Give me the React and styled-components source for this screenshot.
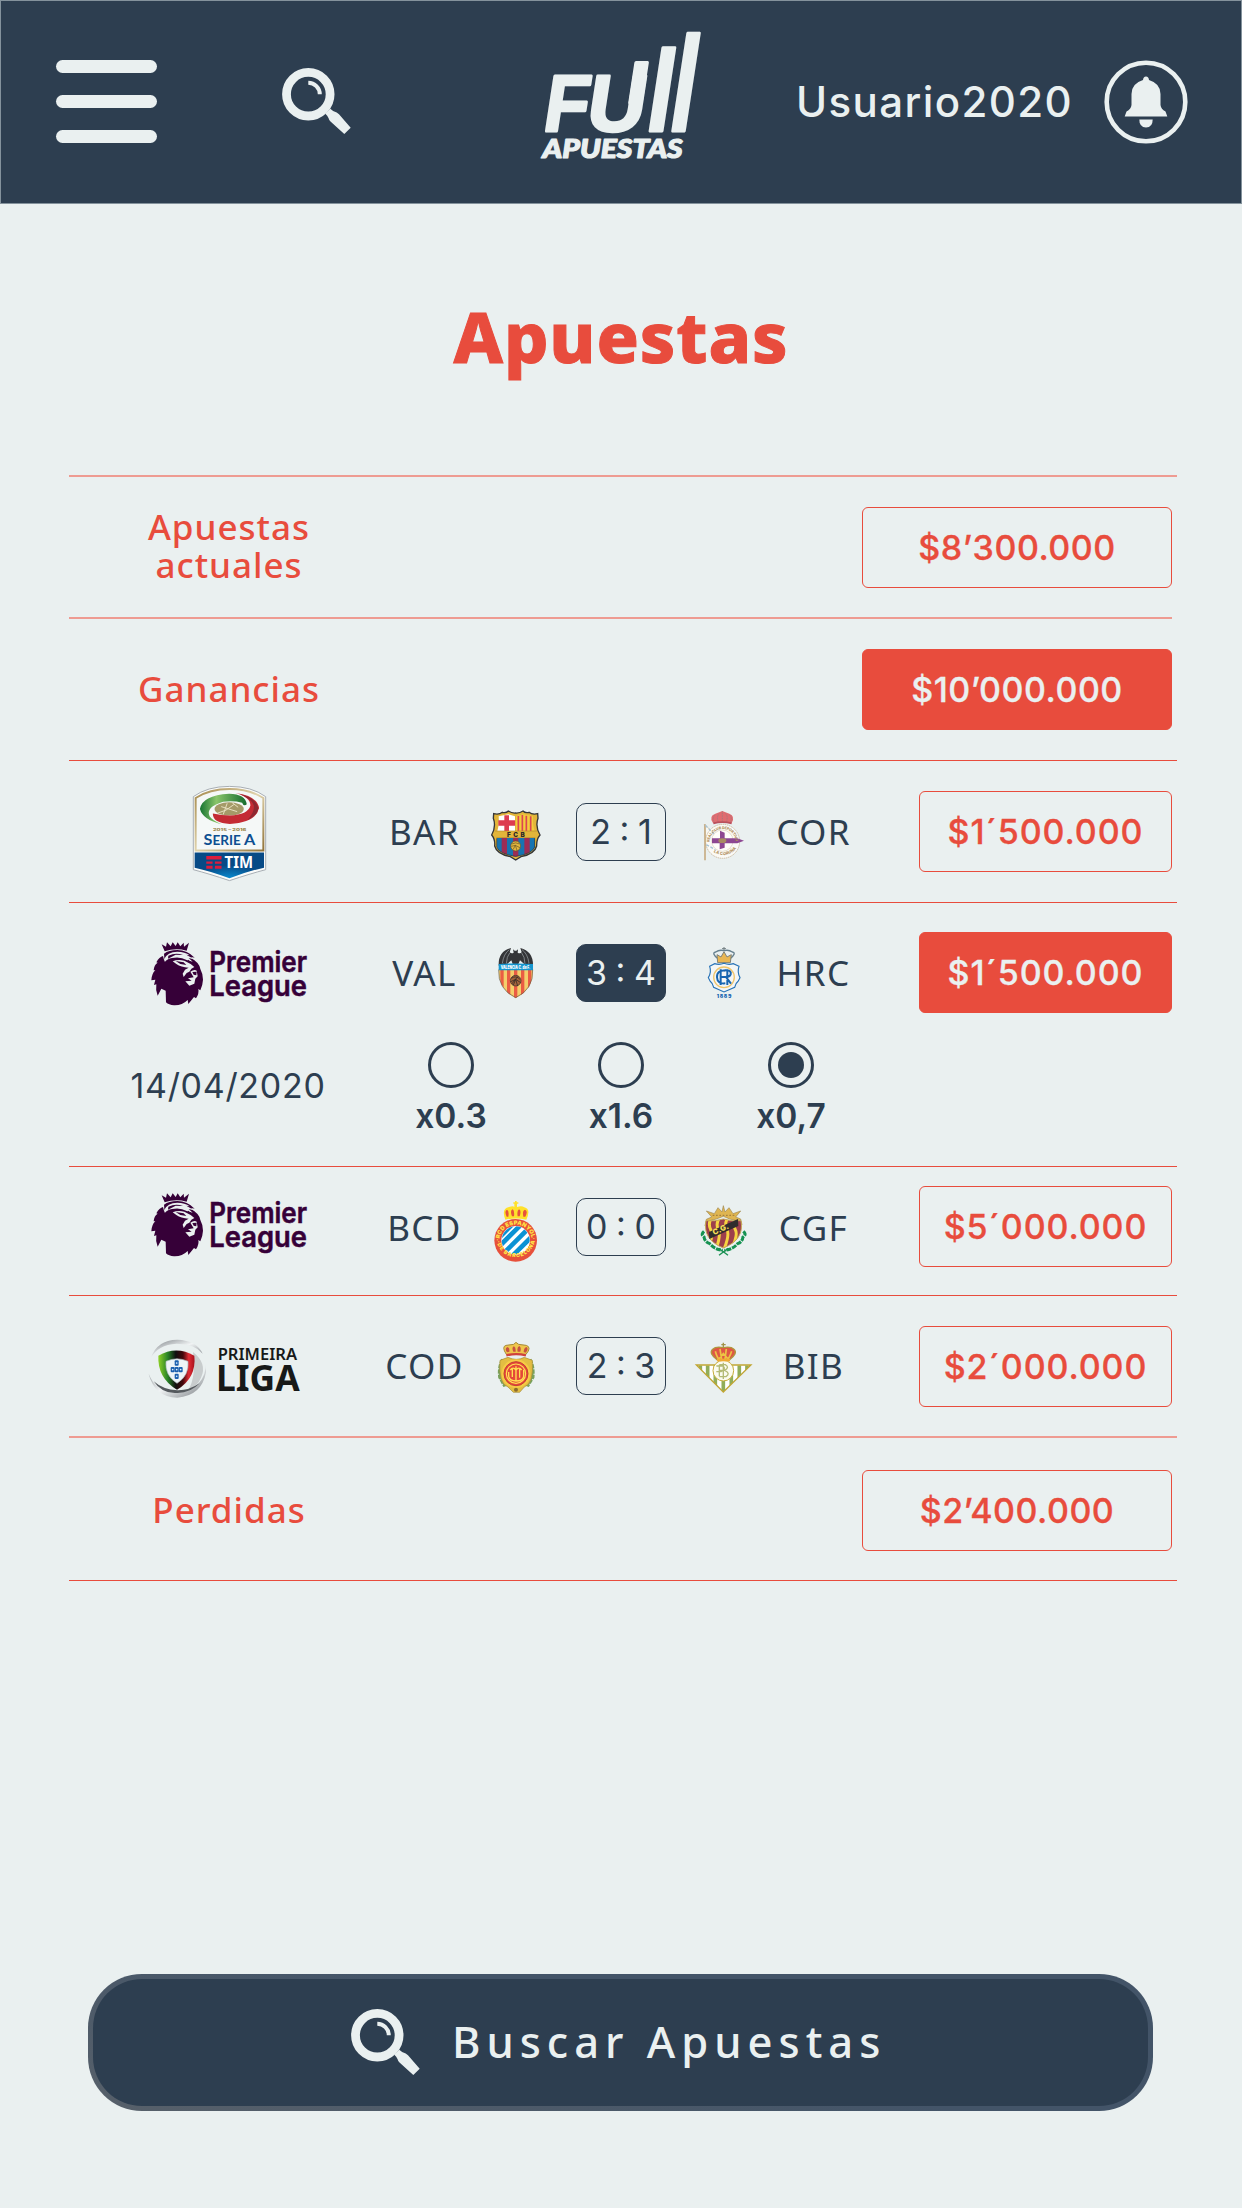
import React from "react";
import styled, { createGlobalStyle, css } from "styled-components";

const navy = "#2d3e50";
const red = "#e84c3d";
const paleRed = "#ee9b92";
const paper = "#eaf0f0";

const GlobalStyle = createGlobalStyle`
  body { margin: 0; background: ${paper}; }
  *, *::before, *::after { box-sizing: border-box; }
`;

const Screen = styled.div`
  width: 1242px;
  height: 2208px;
  display: flex;
  flex-direction: column;
  background: ${paper};
  color: ${navy};
  font-family: Inter, "Noto Sans", sans-serif;
  overflow: hidden;
  svg { display: block; flex: none; overflow: visible; }
`;

const Header = styled.header`
  display: flex;
  align-items: center;
  height: 204px;
  padding: 0 53px 1px 55px;
  background: ${navy};
  border: 1px solid #84929c;
  color: ${paper};
`;

const MenuButton = styled.button`
  display: flex;
  flex-direction: column;
  gap: 22px;
  width: 101px;
  padding: 0;
  border: 0;
  background: none;
  margin-right: 125px;
`;

const MenuBar = styled.span`
  height: 13px;
  border-radius: 6.5px;
  background: ${paper};
`;

const Logo = styled.svg`
  margin: -14px 0 0 189px;
`;

const User = styled.span`
  margin-left: auto;
  margin-right: 31px;
  font-size: 42px;
  font-weight: 500;
  letter-spacing: 1.4px;
`;

const Title = styled.h1`
  margin: 84px 0 0;
  height: 187px;
  text-align: center;
  font-family: "Noto Sans", sans-serif;
  font-size: 70px;
  line-height: 96px;
  font-weight: 800;
  letter-spacing: 0.9px;
  color: ${red};
  -webkit-text-stroke: 1px ${red};
`;

const Table = styled.section`
  width: 1108px;
  margin-left: 69px;
`;

const Row = styled.div`
  display: flex;
  flex-direction: column;
  height: ${(p) => p.$h}px;
  width: ${(p) => (p.$short ? 1103 : 1108)}px;
  padding-top: ${(p) => p.$top || 0}px;
  border-top: ${(p) => (p.$soft ? `2px solid ${paleRed}` : `1px solid ${red}`)};
`;

const Summary = styled.div`
  flex: 1;
  display: flex;
  align-items: center;
  width: 1103px;
`;

const Label = styled.div`
  width: 320px;
  padding-bottom: 2px;
  text-align: center;
  font-family: "Noto Sans", sans-serif;
  font-size: 35px;
  line-height: 38px;
  font-weight: 500;
  letter-spacing: 1px;
  white-space: pre-line;
  color: ${red};
`;

const Amount = styled.div`
  display: flex;
  align-items: center;
  justify-content: center;
  width: ${(p) => (p.$wide ? 310 : 253)}px;
  height: 81px;
  margin-left: auto;
  border: 1.4px solid ${red};
  border-radius: 6px;
  font-size: 34px;
  font-weight: 500;
  letter-spacing: ${(p) => (p.$wide ? 0.5 : 0.9)}px;
  color: ${red};
  -webkit-text-stroke: 0.3px currentColor;
  ${(p) => p.$filled && css`background: ${red}; color: ${paper};`}
`;

const Match = styled.div`
  display: grid;
  grid-template-columns: 320px 71px 112px 98px 107px 73px 1fr;
  align-items: center;
  justify-items: center;
  width: 1103px;
  height: ${(p) => p.$h}px;
`;

const Cell = styled.div`
  display: flex;
  align-items: center;
  justify-content: center;
  padding-top: ${(p) => p.$drop || 0}px;
  padding-bottom: ${(p) => p.$lift || 0}px;
`;

const AmountCell = styled.div`
  justify-self: end;
`;

const Team = styled.span`
  font-family: "Noto Sans", sans-serif;
  font-size: 35px;
  line-height: 40px;
  letter-spacing: 1.4px;
  margin-top: ${(p) => p.$shift || 0}px;
  white-space: nowrap;
`;

const Score = styled.div`
  display: flex;
  align-items: center;
  justify-content: center;
  width: 90px;
  height: 58px;
  border: 1.4px solid ${navy};
  border-radius: 10px;
  font-size: 34px;
  line-height: 40px;
  font-weight: 400;
  word-spacing: -1px;
  white-space: nowrap;
  ${(p) => p.$filled && css`background: ${navy}; color: ${paper};`}
`;

const Detail = styled.div`
  display: flex;
  align-items: flex-start;
`;

const DateText = styled.time`
  width: 318px;
  padding-top: 24px;
  text-align: center;
  font-size: 34px;
  line-height: 40px;
  font-weight: 400;
  letter-spacing: 0.7px;
`;

const Odds = styled.div`
  display: flex;
  gap: 50px;
  padding-left: 4px;
`;

const Odd = styled.label`
  display: flex;
  flex-direction: column;
  align-items: center;
  width: 120px;
  gap: 8px;
  font-size: 33.5px;
  line-height: 40px;
  font-weight: 600;
`;

const Radio = styled.span`
  display: flex;
  align-items: center;
  justify-content: center;
  width: 46px;
  height: 46px;
  border: 3px solid ${navy};
  border-radius: 50%;
`;

const RadioDot = styled.span`
  width: 26px;
  height: 26px;
  border-radius: 50%;
  background: ${navy};
`;

const Shifted = styled.div`
  padding-right: 11px;
`;

const SearchButton = styled.button`
  display: flex;
  align-items: center;
  gap: 32px;
  width: 1065px;
  height: 137px;
  margin: auto 0 97px 88px;
  padding: 0 0 0 258px;
  border: 5px solid transparent;
  border-radius: 54px;
  background: linear-gradient(${navy}, ${navy}) padding-box,
    linear-gradient(15deg, #57606a, #435468 55%) border-box;
  color: ${paper};
  font-family: "Noto Sans", sans-serif;
  font-size: 43.5px;
  font-weight: 500;
  letter-spacing: 6px;
  white-space: nowrap;
`;

const ButtonText = styled.span`
  padding-bottom: 3px;
`;

const SearchIcon = () => (
  <svg width="69" height="67" viewBox="0 0 69 67">
    <circle cx="26.3" cy="26.2" r="21.8" fill="none" stroke={paper} strokeWidth="8.8" />
    <path d="M26.3 14.8A11.6 11.6 0 0 1 37.8 26.3" fill="none" stroke={paper} strokeWidth="4" />
    <path d="M48.3 40.7Q51 43.5 54.7 44.5L57 46.3L68.7 59.7L62.3 66L48.5 53.5Q47 52 46.5 50Q45.5 47.5 43.3 45.7Z" fill={paper} />
  </svg>
);

const BellIcon = () => (
  <svg width="84" height="84" viewBox="0 0 84 84">
    <circle cx="42" cy="42" r="39.3" fill="none" stroke={paper} strokeWidth="4.6" />
    <path d="M42 16.5Q44.7 16.5 45 20Q56.5 23.5 56.5 34V45Q57 49 61.5 51.5L63.3 56.5H20.7L22.5 51.5Q27 49 27.5 45V34Q27.5 23.5 39 20Q39.300 16.500 42 16.500Z" fill={paper} />
    <path d="M35.300 59.600H48.700Q48.700 67.500 42 67.500Q35.300 67.500 35.300 59.600Z" fill={paper} />
  </svg>
);

const BrandMark = () => (
  <Logo width="164" height="134" viewBox="540 28 164 134" fill={paper} stroke={paper} strokeLinejoin="round" fontFamily="Liberation Sans, sans-serif" fontWeight="700">
    <g strokeWidth="3">
      <text transform="translate(541.500 131) skewX(-8.700) scale(.9 1)" fontSize="80">F</text>
      <text transform="translate(584.500 131) skewX(-8.700)" fontSize="80">U</text>
      <rect transform="translate(623.700 131) skewX(-8.700)" x="1.700" y="-68.500" width="11.500" height="40" />
      <text transform="translate(643.500 131) skewX(-8.700) scale(.79 1)" fontSize="115">l</text>
      <text transform="translate(666 131) skewX(-8.700) scale(.67 1)" fontSize="135">l</text>
    </g>
    <text x="542.500" y="158" fontFamily="Lato, sans-serif" fontStyle="italic" fontWeight="900" fontSize="26" strokeWidth="1.200" textLength="140" lengthAdjust="spacingAndGlyphs">APUESTAS</text>
  </Logo>
);

const SerieA = () => (
  <svg width="75" height="97" viewBox="394 973 226 292">
    <defs>
      <linearGradient id="gold" x1="0" x2="1" y2="1"><stop stopColor="#a58a4d" /><stop offset=".5" stopColor="#e0d3ac" /><stop offset="1" stopColor="#92743a" /></linearGradient>
      <linearGradient id="green"><stop stopColor="#167431" /><stop offset=".35" stopColor="#8ac56a" /><stop offset="1" stopColor="#146b2d" /></linearGradient>
      <radialGradient id="blue" cy="1"><stop stopColor="#0b8bd0" /><stop offset="1" stopColor="#074a86" /></radialGradient>
    </defs>
    <path d="M398 1008Q440 977 507 977Q574 977 616 1008V1228Q570 1240 507 1261Q444 1240 398 1228Z" fill="#fafbfa" stroke="#a7adb3" strokeWidth="3" />
    <path d="M405 1012Q447 985 507 985Q567 985 609 1012V1170H405Z" fill="#f5f8f7" stroke="url(#gold)" strokeWidth="6" />
    <path d="M402 1176H611V1222Q565 1232 507 1254Q449 1232 402 1222Z" fill="url(#blue)" />
    <ellipse cx="506" cy="1045" rx="44" ry="20" fill="#a59a68" />
    <path d="M470 1058Q498 1052 520 1032M482 1038L530 1053M500 1028L488 1062M515 1026L533 1040" stroke="#e7e0c0" strokeWidth="3" fill="none" />
    <path d="M483 1091Q426 1077 418 1045Q424 1004 506 999Q555 1000 559 1031Q550 1039 545 1026Q520 1019 488 1023Q434 1039 447 1067Q455 1080 483 1091Z" fill="url(#green)" />
    <path d="M525 997Q591 1006 596 1042Q587 1086 508 1090Q455 1087 457 1059Q484 1065 508 1065Q563 1063 570 1035Q570 1009 525 997Z" fill="#c42b34" />
    <path d="M536 1000Q588 1012 594 1042Q591 1066 561 1078Q584 1054 580 1034Q574 1014 536 1000Z" fill="#8e2831" />
    <text x="457" y="1111" textLength="101" lengthAdjust="spacingAndGlyphs" fontFamily="Inter, sans-serif" fontWeight="800" fontSize="11" fill="#998347">2015 – 2016</text>
    <text x="429" y="1155" textLength="156" lengthAdjust="spacingAndGlyphs" fontFamily="Lato, sans-serif" fontWeight="700" fontSize="48" fill="#0d4f91">S<tspan fontSize="40">ERIE </tspan>A</text>
    <path d="M437 1187H483V1197H437ZM437 1203H456V1210H437ZM463 1203H483V1210H463ZM437 1216H456V1225H437ZM463 1216H483V1225H463Z" fill="#dc1c3d" />
    <text x="492" y="1224" textLength="86" lengthAdjust="spacingAndGlyphs" fontFamily="Noto Sans, sans-serif" fontWeight="700" fontSize="49" fill="#fff">TIM</text>
  </svg>
);

const PremierLeague = () => (
  <svg width="157" height="67" viewBox="92 92 471 201">
    <g fill="#360038">
      <path d="M124 102L137 109L140 96L151 108L157 96L166 107L172 96L180 108L190 97L191 109L206 97L199 121Q166 112 133 123Z" />
      <path d="M131 130Q145 119 171 119Q201 119 223 142Q217 140 211 142Q238 157 240 176Q247 188 248 208Q247 226 240 240L234 236Q237 249 227 264L221 260L204 281L202 269Q185 286 161 285Q145 284 137 276L136 241L123 235L112 256Q105 240 108 222L101 224L105 208L93 210Q94 190 105 180L100 180Q101 164 112 157L108 156Q117 139 128 137L133 156Z" />
    </g>
    <g fill={paper}>
      <path d="M131 147Q141 124 171 124Q194 124 208 135L198 133L221 147L205 143L217 154L199 149Q180 138 155 143Q140 146 134 154Z" />
      <path d="M157 153Q173 146 192 151L211 161L222 170Q212 174 207 184L199 188L190 200L187 190L194 178L205 172Q182 171 168 161Z" />
      <path d="M210 184Q222 176 229 181L232 198L225 205L222 220L207 226L195 213L214 211L203 204L220 201Z" />
    </g>
    <g fill="#360038">
      <path d="M144 136Q166 125 188 134L166 133L143 145ZM166 152L190 156L198 164L180 161ZM203 148L220 160L202 153ZM216 185L229 184L228 195L220 193Z" />
    </g>
    <g fill="#360038" stroke="#360038" strokeWidth="1.500" fontFamily="Inter, sans-serif" fontWeight="600" fontSize="87">
      <text x="267" y="186" textLength="293" lengthAdjust="spacingAndGlyphs">Premier</text>
      <text x="267" y="258" textLength="293" lengthAdjust="spacingAndGlyphs">League</text>
    </g>
  </svg>
);

const PrimeiraLiga = () => (
  <svg width="152" height="59" viewBox="83 538 456 177">
    <defs>
      <linearGradient id="ring" y2="1"><stop stopColor="#777c81" /><stop offset=".5" stopColor="#f0f3f4" /><stop offset="1" stopColor="#777c81" /></linearGradient>
      <linearGradient id="flag"><stop stopColor="#8ed127" /><stop offset=".26" stopColor="#288327" /><stop offset=".48" stopColor="#101010" /><stop offset=".68" stopColor="#45070b" /><stop offset=".84" stopColor="#e12c35" /><stop offset="1" stopColor="#a7101c" /></linearGradient>
    </defs>
    <path d="M91 596Q110 540 171 540Q229 542 247 582Q224 552 169 552Q112 555 91 596Z" fill="url(#ring)" />
    <path d="M218 577Q262 612 242 654Q232 679 204 691Q228 650 218 577Z" fill="#c8cccd" />
    <path d="M85 642Q102 712 171 714Q244 709 257 638V606Q258 687 171 697Q106 698 85 642Z" fill="url(#ring)" />
    <path d="M100 665Q126 704 172 700Q211 700 238 671Q205 693 171 692Q128 690 100 665Z" fill="#555a5e" />
    <path d="M114 588Q168 557 222 588Q229 655 170 690Q111 655 114 588Z" fill="url(#flag)" />
    <path d="M137 605Q170 590 203 605Q207 648 170 671Q133 648 137 605Z" fill="#eef4f7" stroke="#adb8bd" strokeWidth="2" />
    <g fill="#1b5fae"><rect x="163" y="602" width="12" height="16" rx="3" /><rect x="151" y="622" width="12" height="16" rx="3" /><rect x="163" y="622" width="12" height="16" rx="3" /><rect x="175" y="622" width="12" height="16" rx="3" /><rect x="163" y="642" width="12" height="16" rx="3" /></g>
    <g fill="#dff0ff"><circle cx="169" cy="610" r="2.500" /><circle cx="157" cy="630" r="2.500" /><circle cx="169" cy="630" r="2.500" /><circle cx="181" cy="630" r="2.500" /><circle cx="169" cy="650" r="2.500" /></g>
    <g fill="#171918" fontFamily="Noto Sans, sans-serif" fontWeight="700">
      <text x="292" y="600" fontSize="47" textLength="238" lengthAdjust="spacingAndGlyphs" fontWeight="600">PRIMEIRA</text>
      <text x="287" y="695" fontSize="105" textLength="251" lengthAdjust="spacingAndGlyphs">LIGA</text>
    </g>
  </svg>
);

const Barcelona = () => (
  <svg width="49.700" height="50.700" viewBox="365 151 149 152">
    <defs><clipPath id="fcb"><path d="M382 234H497V262Q490 282 439 291Q388 282 382 262Z" /></clipPath></defs>
    <path d="M373 162Q389 166 399 158Q410 161 417 154Q427 161 439 160Q451 161 461 154Q468 161 479 158Q489 166 505 162L506 176Q497 200 512 226Q501 239 502 259Q496 283 455 291L439 301L423 291Q382 283 376 259Q378 239 367 226Q381 200 372 176Z" fill="#e2b53a" stroke="#353638" strokeWidth="4" />
    <path d="M388 170L417 164L437 170V214H384Q390 195 388 170Z" fill="#fff" />
    <path d="M405 167H419V182H437V198H419V214H405V198H387V182H405Z" fill="#dd3c50" />
    <path d="M440 170L462 164L491 170Q489 195 496 214H440Z" fill="#f3cc3d" />
    <path d="M447 169V214M459 166V214M471 168V214M484 170V214" stroke="#dc4650" strokeWidth="5" />
    <path d="M376 214H503M381 234H498" stroke="#b78c2e" strokeWidth="2" />
    <text x="413" y="231" fontFamily="Inter, sans-serif" fontSize="19" fontWeight="900" textLength="53" fill="#2d2b28">FCB</text>
    <g clipPath="url(#fcb)"><path d="M380 234H500V292H380Z" fill="#1774b1" /><path d="M405 230V295M439 230V295M473 230V295" stroke="#9c2d55" strokeWidth="16" /></g>
    <circle cx="439" cy="259" r="15" fill="#e1b63e" stroke="#5f5130" strokeWidth="2" />
    <path d="M427 253Q439 246 451 253M426 260L438 257L452 264M431 270L438 257L443 272" stroke="#655322" strokeWidth="2" fill="none" />
    <path d="M382 236V262Q390 283 439 290Q488 283 496 262V236" fill="none" stroke="#353638" strokeWidth="2" />
  </svg>
);

const Deportivo = () => (
  <svg width="42" height="50.700" viewBox="997 151 126 152">
    <defs><path id="depTop" d="M1017 247A39 39 0 0 1 1095 247" /><path id="depLow" d="M1029 277A48 48 0 0 0 1099 262" /></defs>
    <path d="M1001 193L1018 210L1030 279L1005 259Z" fill="#f8f8f3" stroke="#c8b99d" strokeWidth="2" />
    <circle cx="1056" cy="245" r="51" fill="#fbfaf6" stroke="#cdbba0" strokeWidth="3" strokeDasharray="4 2" />
    <path d="M1003 194V302" stroke="#c7ad84" strokeWidth="5" />
    <path d="M1004 197L1042 235M1007 255L1034 270" stroke="#a6c3d6" strokeWidth="4" strokeDasharray="9 5" />
    <circle cx="1055" cy="243" r="32" fill="#fffefa" stroke="#ddd0bc" strokeWidth="2" />
    <path d="M1048 213L1062 219V236H1100L1120 243L1100 251H1062V264L1047 269V251H1024V236H1048Z" fill="#8d4792" />
    <ellipse cx="1055" cy="243" rx="12" ry="7" fill="#a98b63" />
    <path d="M1027 190Q1013 170 1034 162Q1047 157 1055 154Q1063 157 1076 162Q1095 170 1083 190Z" fill="#e06b70" />
    <path d="M1031 188Q1023 175 1034 165M1043 188Q1037 171 1045 162M1055 188V154M1067 188Q1073 171 1065 162M1079 188Q1087 175 1076 165" stroke="#a9777a" strokeWidth="3" strokeDasharray="3 2" fill="none" />
    <path d="M1028 191Q1055 184 1083 191" stroke="#b9505c" strokeWidth="5" fill="none" />
    <g fill="#b08e59" fontFamily="Inter, sans-serif" fontSize="12" fontWeight="800"><text fontSize="11"><textPath href="#depTop" textLength="120">REAL CLUB DEPORTIVO</textPath></text><text><textPath href="#depLow" textLength="76">LA CORUÑA</textPath></text></g>
  </svg>
);

const Valencia = () => (
  <svg width="35.700" height="51" viewBox="386 80 107 153">
    <defs><clipPath id="val"><path d="M388 145H491Q493 207 439 233Q385 207 388 145Z" /></clipPath></defs>
    <g clipPath="url(#val)"><path d="M386 140H494V234H386Z" fill="#f4cd6b" /><path d="M398 140V234M418 140V234M439 140V234M460 140V234M481 140V234" stroke="#ea5c43" strokeWidth="10" /></g>
    <path d="M388 136Q386 93 425 83L421 96Q427 101 433 97L431 87L436 91L441 91L446 87L445 97Q452 101 457 96L453 83Q492 93 491 136L477 130L467 133L452 120L447 131H430L426 120L411 133L401 130Z" fill="#343538" />
    <path d="M420 88Q403 100 399 129M421 98Q412 108 411 130M458 88Q475 100 479 129M457 98Q466 108 467 130" stroke="#8c9295" strokeWidth="2.500" fill="none" />
    <path d="M388 131Q439 128 491 131V150H388Z" fill="#1696cf" />
    <text x="394" y="146" textLength="89" lengthAdjust="spacingAndGlyphs" fontFamily="Inter, sans-serif" fontWeight="900" fontSize="13" fill="#fff">VALENCIA C. de F.</text>
    <path d="M388 148Q385 207 439 232Q493 207 490 148" fill="none" stroke="#67594a" strokeWidth="2" />
    <circle cx="439" cy="181" r="16" fill="#a4643b" stroke="#4d3b30" strokeWidth="2.500" />
    <path d="M426 174Q440 164 452 177M424 184L439 177L454 187M432 194L439 177L445 197M427 191L446 168" stroke="#372c27" strokeWidth="2.500" fill="none" />
  </svg>
);

const Recreativo = () => (
  <svg width="34" height="51.300" viewBox="1008 82 102 154">
    <path d="M1059 82V92M1053 87H1065" stroke="#707c80" strokeWidth="3" />
    <path d="M1041 117Q1020 100 1034 97Q1045 89 1059 93Q1073 89 1084 97Q1098 100 1077 117" fill="none" stroke="#66808f" strokeWidth="4" />
    <path d="M1038 105L1050 112L1059 96L1068 112L1081 105L1078 129H1040Z" fill="#e8b653" stroke="#7e8176" strokeWidth="3" />
    <path d="M1016 140L1031 132Q1045 137 1059 131Q1073 137 1087 132L1104 140Q1098 157 1107 174L1102 184Q1094 190 1091 203L1059 217L1028 203Q1025 190 1017 184L1012 174Q1022 157 1016 140Z" fill="#f3f6f6" stroke="#2672b7" strokeWidth="3.500" />
    <circle cx="1059" cy="173" r="31" fill="none" stroke="#efc56b" strokeWidth="4" />
    <g fill="none" stroke="#1765b0" strokeWidth="6"><path d="M1049 149V196M1069 149V196M1049 172H1069M1063 153Q1037 151 1038 173Q1039 194 1063 191M1061 152H1067Q1082 153 1079 164Q1076 172 1065 172L1080 192" /></g>
    <text x="1037" y="234" textLength="44" fontFamily="Inter, sans-serif" fontWeight="900" fontSize="15" fill="#1765b0">1889</text>
  </svg>
);

const Espanyol = () => (
  <svg width="44" height="61" viewBox="373 121 132 183">
    <defs>
      <clipPath id="esp"><circle cx="438" cy="239" r="42" /></clipPath>
      <path id="espTop" d="M389 241A49 49 0 0 1 487 241" /><path id="espLow" d="M381 242A58 58 0 0 0 495 242" />
    </defs>
    <path d="M407 177Q394 143 418 139Q431 134 434 139V129H431V125H436V121H441V125H446V129H442V139Q456 134 464 140Q485 145 470 177Q438 170 407 177Z" fill="#ffe12b" />
    <path d="M411 168Q403 151 412 147Q419 149 416 168ZM427 167Q420 149 429 146Q435 150 433 167ZM450 167Q456 149 448 146Q441 150 444 167ZM467 168Q476 151 466 147Q457 149 461 168Z" fill="#e6523d" />
    <circle cx="438" cy="239" r="64" fill="#e7503b" />
    <circle cx="438" cy="239" r="43" fill="#fff" />
    <g clipPath="url(#esp)" stroke="#0b92d4" strokeWidth="14"><path d="M380 239L438 181M382 264L462 184M400 280L478 202M418 296L496 218" /></g>
    <g fill="#ffe345" fontFamily="Inter, sans-serif" fontWeight="900"><text fontSize="17"><textPath href="#espTop" textLength="150">·RCD ESPANYOL·</textPath></text><text fontSize="16"><textPath href="#espLow" textLength="170">·DE BARCELONA·</textPath></text></g>
  </svg>
);

const Gimnastic = () => (
  <svg width="44.700" height="51.300" viewBox="992 135 134 154">
    <defs><clipPath id="nas"><path d="M1007 182Q1034 185 1059 177Q1085 185 1112 182Q1123 239 1059 264Q996 239 1007 182Z" /></clipPath></defs>
    <path d="M1001 214Q990 224 1001 231Q1003 246 1018 251Q1032 268 1057 271M1119 214Q1130 224 1118 231Q1116 246 1102 251Q1088 268 1062 271" fill="none" stroke="#169252" strokeWidth="9" strokeDasharray="15 3" />
    <path d="M1046 286L1074 265M1073 286L1045 265" stroke="#178f51" strokeWidth="4" />
    <path d="M1008 153L1032 161L1043 143L1055 156L1059 137L1064 156L1076 143L1088 161L1111 153L1096 171L1111 177L1115 195L1100 182L1078 177L1059 169L1038 177L1018 182L1004 197L1008 178L1024 171Z" fill="#dfb551" stroke="#a0884f" strokeWidth="2" />
    <path d="M1027 166H1093" stroke="#98743b" strokeWidth="3" strokeDasharray="5 5" />
    <g clipPath="url(#nas)"><path d="M1000 176H1120V265H1000Z" fill="#9d3f4c" /><path d="M1021 178Q1013 193 1021 209T1018 250M1045 178Q1036 193 1044 209T1038 265M1070 178Q1062 193 1070 209T1062 265M1095 178Q1086 193 1095 209T1084 265" fill="none" stroke="#f6d441" strokeWidth="9" /></g>
    <path d="M1007 182Q1034 185 1059 177Q1085 185 1112 182Q1123 239 1059 264Q996 239 1007 182Z" fill="none" stroke="#c7aa57" strokeWidth="3" />
    <path d="M1016 216L1103 177L1104 198L1017 237Z" fill="#302d2d" />
    <text transform="translate(1031 226) rotate(-25)" fontFamily="Inter, sans-serif" fontWeight="900" fontSize="23" fill="#f5dc58">C.G.</text>
  </svg>
);

const Mallorca = () => (
  <svg width="38.300" height="51.700" viewBox="381 548 115 155">
    <path d="M397 600Q384 621 388 654L402 679L417 673M481 600Q493 621 490 654L475 679L460 673" fill="#79a05b" stroke="#79a05b" strokeWidth="7" strokeDasharray="13 3" />
    <path d="M390 603L414 594Q439 606 463 594L487 603Q492 674 463 683L449 699H430L414 683Q385 674 390 603Z" fill="#e3bd42" stroke="#a48c3a" strokeWidth="2" />
    <circle cx="438" cy="643" r="43" fill="#f6cc45" />
    <circle cx="438" cy="643" r="36" fill="#e54839" stroke="#c43b35" strokeWidth="3" />
    <circle cx="438" cy="643" r="29" fill="none" stroke="#ffe153" strokeWidth="3.500" />
    <path d="M416 638V651Q419 665 438 665Q459 665 461 651V631M427 625V653M438 621V666M449 625V655M421 632Q429 621 438 632Q447 621 455 632" stroke="#ffe153" strokeWidth="4" fill="none" />
    <path d="M409 585Q394 562 408 558L431 555L438 549L446 555L469 558Q486 564 468 585Z" fill="#efc64d" stroke="#a58b3b" strokeWidth="3" />
    <path d="M411 579Q403 567 412 563Q420 565 418 577ZM430 577Q424 563 432 561Q438 564 437 577ZM443 577Q440 563 448 560Q455 565 451 577ZM461 578Q462 564 470 563Q477 570 467 580Z" fill="#c75142" />
    <path d="M409 588Q438 581 468 588" fill="none" stroke="#d0423c" strokeWidth="7" />
    <circle cx="438" cy="691" r="6" fill="#8b6b2d" />
  </svg>
);

const Betis = () => (
  <svg width="57.300" height="51.300" viewBox="974 548 172 154">
    <defs><clipPath id="betis"><path d="M979 618H1141L1059 698Z" /></clipPath></defs>
    <path d="M976 616H1144L1059 700Z" fill="#fff" />
    <g clipPath="url(#betis)"><path d="M990 610V702M1012 610V702M1035 610V702M1059 610V702M1083 610V702M1107 610V702M1130 610V702" stroke="#91ad59" strokeWidth="11" /></g>
    <path d="M978 617H1142L1059 698Z" fill="none" stroke="#c0a533" strokeWidth="4" />
    <circle cx="1059" cy="634" r="31" fill="#fbfbef" stroke="#c8ad3a" strokeWidth="3" />
    <g fill="none" stroke="#b3ba75" strokeWidth="4"><path d="M1047 616V651M1047 616H1065Q1079 624 1063 633H1047M1063 633Q1082 642 1067 652H1047M1038 620H1058Q1069 628 1052 637H1038M1059 610V659" /></g>
    <path d="M1041 602Q1014 582 1027 570Q1037 560 1059 565Q1081 560 1091 570Q1104 582 1077 602Z" fill="#df5744" stroke="#af973e" strokeWidth="4" />
    <path d="M1035 576Q1041 598 1048 601M1049 569L1054 600M1068 569L1064 600M1084 576Q1077 598 1069 602M1042 604L1059 583L1077 604" stroke="#edc443" strokeWidth="5" fill="none" />
    <path d="M1040 602H1079" stroke="#efaa34" strokeWidth="8" />
    <path d="M1059 550V565M1053 556H1066" stroke="#a09347" strokeWidth="4" />
  </svg>
);

function MatchRow({ league, home, away, homeCrest, awayCrest, score, amount, filled, height, leagueDrop, leagueLift, crestDrop, nameDrop }) {
  return (
    <Match $h={height}>
      <Cell $drop={leagueDrop} $lift={leagueLift}>{league}</Cell>
      <Team $shift={nameDrop}>{home}</Team>
      <Cell $drop={crestDrop}>{homeCrest}</Cell>
      <Score $filled={filled}>{score}</Score>
      <Cell $drop={crestDrop}>{awayCrest}</Cell>
      <Team $shift={nameDrop}>{away}</Team>
      <AmountCell><Amount $filled={filled}>{amount}</Amount></AmountCell>
    </Match>
  );
}

const odds = [
  { label: "x0.3" },
  { label: "x1.6" },
  { label: "x0,7", selected: true },
];

export default function App() {
  return (
    <>
      <GlobalStyle />
      <Screen>
        <Header>
          <MenuButton aria-label="Menú"><MenuBar /><MenuBar /><MenuBar /></MenuButton>
          <SearchIcon />
          <BrandMark />
          <User>Usuario2020</User>
          <BellIcon />
        </Header>
        <Title>Apuestas</Title>
        <Table>
          <Row $h={142} $soft>
            <Summary><Label>{"Apuestas\nactuales"}</Label><Amount $wide>$8’300.000</Amount></Summary>
          </Row>
          <Row $h={143} $soft $short>
            <Summary><Label>Ganancias</Label><Amount $wide $filled>$10’000.000</Amount></Summary>
          </Row>
          <Row $h={142}>
            <MatchRow height={142} league={<SerieA />} home="BAR" away="COR" homeCrest={<Barcelona />} awayCrest={<Deportivo />} score="2 : 1" amount="$1´500.000" crestDrop={8} leagueDrop={3} />
          </Row>
          <Row $h={264}>
            <MatchRow height={139} league={<PremierLeague />} home="VAL" away="HRC" homeCrest={<Valencia />} awayCrest={<Recreativo />} score="3 : 4" amount="$1´500.000" filled leagueDrop={4} nameDrop={1} />
            <Detail>
              <DateText>14/04/2020</DateText>
              <Odds>
                {odds.map((o) => (
                  <Odd key={o.label}><Radio>{o.selected && <RadioDot />}</Radio>{o.label}</Odd>
                ))}
              </Odds>
            </Detail>
          </Row>
          <Row $h={129}>
            <MatchRow height={119} league={<PremierLeague />} home="BCD" away="CGF" homeCrest={<Espanyol />} awayCrest={<Gimnastic />} score="0 : 0" amount="$5´000.000" crestDrop={9} leagueLift={3} nameDrop={3} />
          </Row>
          <Row $h={141}>
            <MatchRow height={141} league={<Shifted><PrimeiraLiga /></Shifted>} home="COD" away="BIB" homeCrest={<Mallorca />} awayCrest={<Betis />} score="2 : 3" amount="$2´000.000" crestDrop={4} leagueDrop={5} />
          </Row>
          <Row $h={144} $soft $top={3}>
            <Summary><Label>Perdidas</Label><Amount $wide>$2’400.000</Amount></Summary>
          </Row>
          <Row $h={1} />
        </Table>
        <SearchButton><SearchIcon /><ButtonText>Buscar Apuestas</ButtonText></SearchButton>
      </Screen>
    </>
  );
}
